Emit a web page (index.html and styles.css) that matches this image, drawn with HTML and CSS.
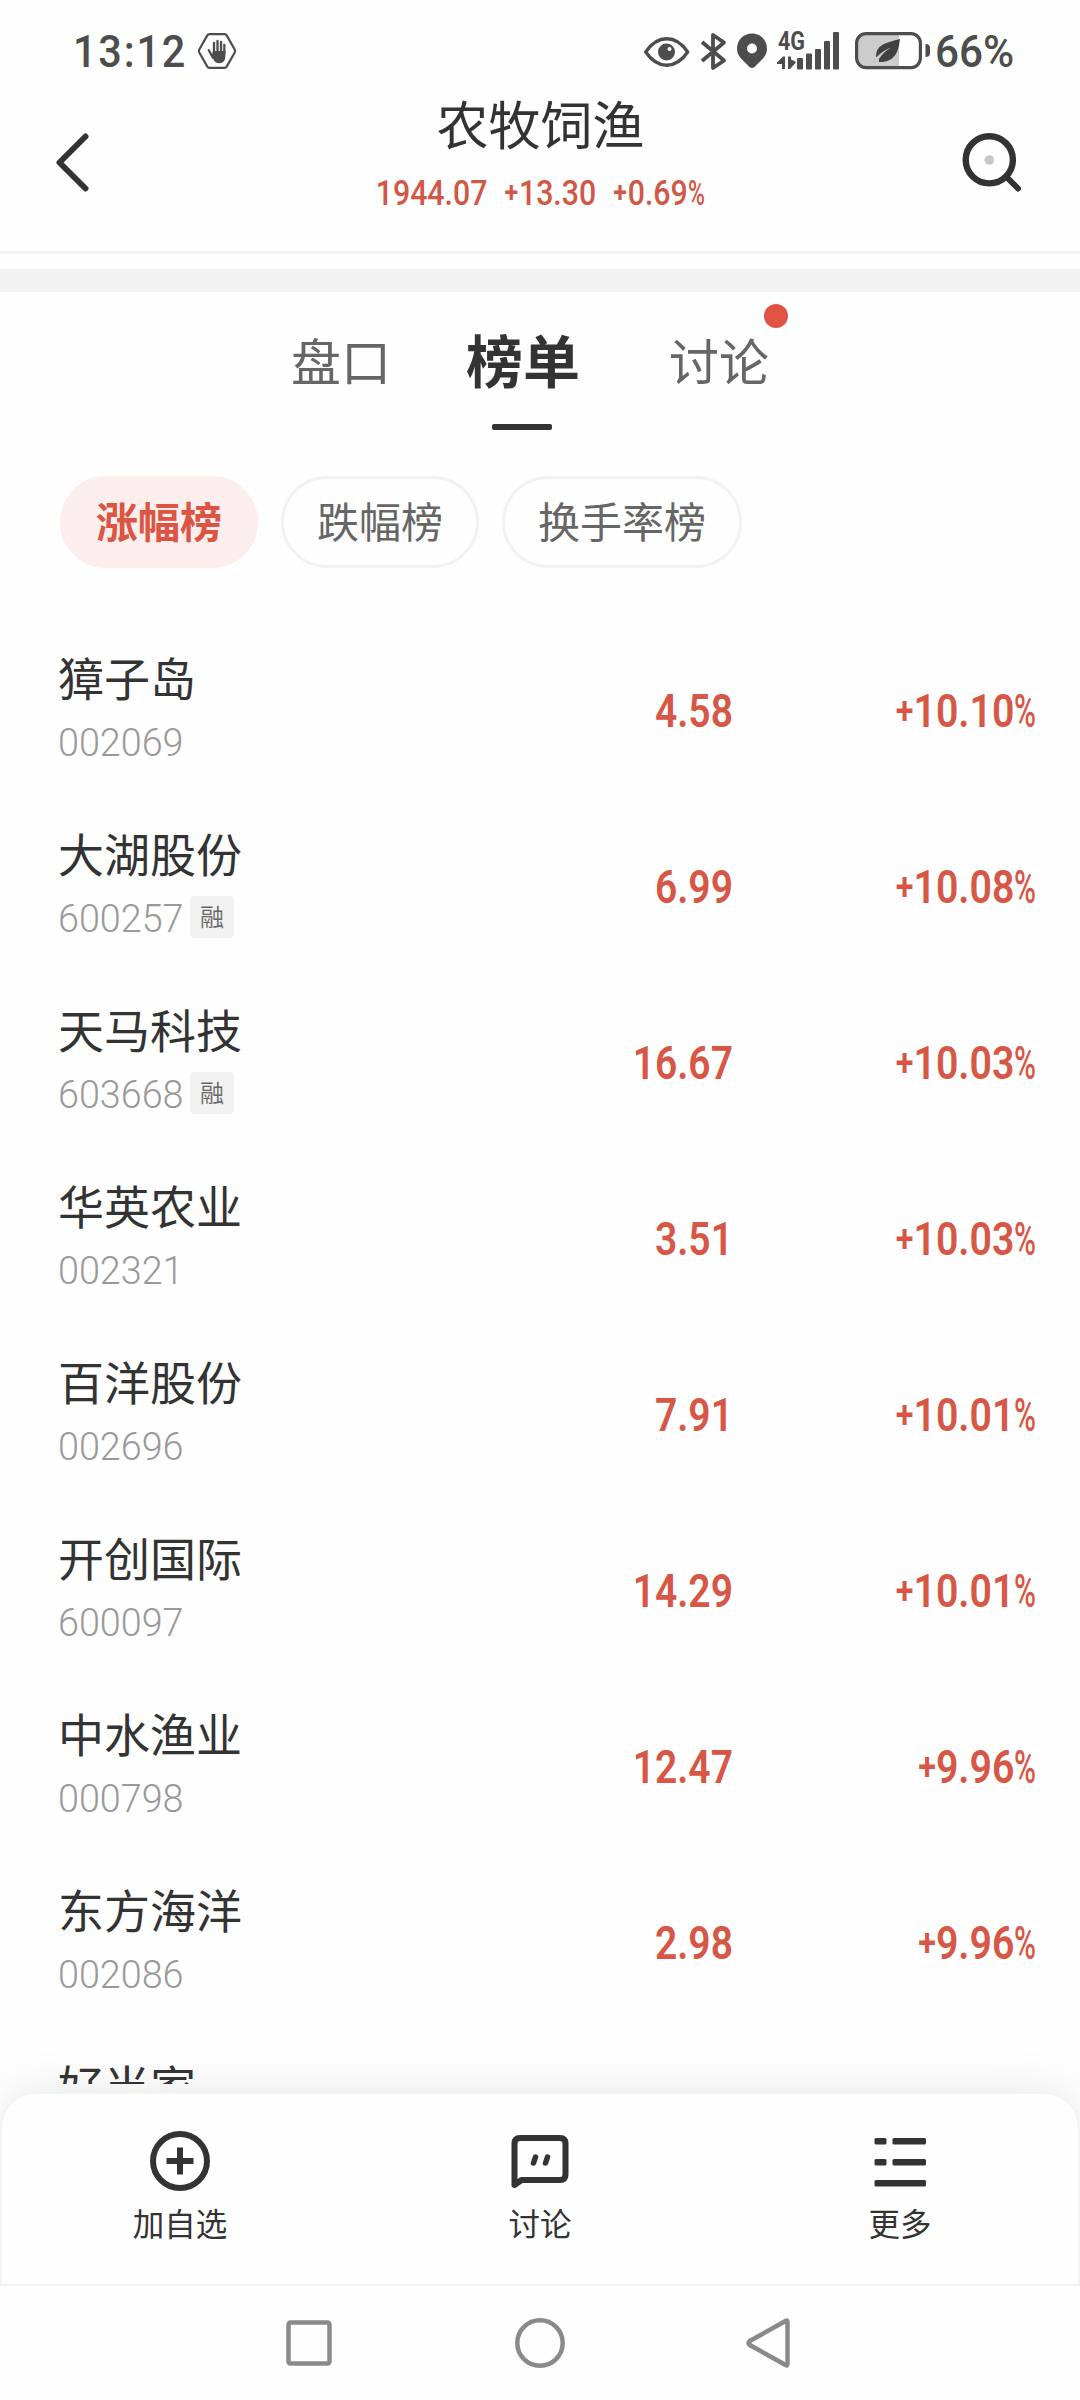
FILE: index.html
```html
<!DOCTYPE html>
<html lang="zh-CN">
<head>
<meta charset="utf-8">
<title>农牧饲渔</title>
<link rel="stylesheet" href="styles.css">
</head>
<body>
<div class="phone">
  <div class="status">
    <span class="clock">13:12</span>
    <svg class="hexagon" width="40" height="38" viewBox="0 0 40 38">
      <path d="M12.5 2.2h15q1.5 0 2.2 1.2l8 14q.8 1.6 0 3.2l-8 14q-.7 1.2-2.2 1.2h-15q-1.500 0-2.200-1.200l-8-14q-.8-1.600 0-3.200l8-14q.7-1.200 2.200-1.200z" fill="none" stroke="#4d4d4d" stroke-width="2.200"/>
      <path d="M11.800 18.300l4 7.200M17 11v11M20.500 9v12M24 10v12M27.300 13v9" fill="none" stroke="#4d4d4d" stroke-width="2.300" stroke-linecap="round"/>
      <path d="M15.900 19h12.500v5q0 7.200-6.200 7.200-3.600 0-5.500-3.200l-2-4z" fill="#4d4d4d"/>
    </svg>
    <div class="status-icons">
      <svg width="198" height="44" viewBox="642 29 198 44" fill="none" stroke="#4d4d4d">
        <path d="M645.700 52q9-13.200 21-13.200t21 13.200q-9 13.200-21 13.200t-21-13.200z" stroke-width="3.400" stroke-linejoin="round"/>
        <circle cx="666.500" cy="52" r="8.500" fill="#4d4d4d" stroke="none"/>
        <circle cx="669.500" cy="49" r="2" fill="#fff" stroke="none"/>
        <path d="M702 42l22 18.500-11 7.500v-33l11 7.500-22 18.500" stroke-width="3.800" stroke-linejoin="round"/>
        <path d="M752 33.500c8.500 0 15 6.500 15 15 0 5-2.500 8.500-5 11l-7.500 7.500q-2.500 2.200-5 0l-7.500-7.500c-2.500-2.500-5-6-5-11 0-8.500 6.500-15 15-15z" fill="#4d4d4d" stroke="none"/>
        <circle cx="752" cy="48.500" r="5" fill="#fff" stroke="none"/>
        <path d="M777 64v-1.500l6-6h2v12.500h-3v-5zM788 56.500h3v3l4.500 2v1.500l-5.500 6h-2z" fill="#4d4d4d" stroke="none"/>
        <g fill="#4d4d4d" stroke="none">
          <rect x="797" y="58" width="6" height="11.500" rx="1"/>
          <rect x="806" y="53.500" width="6" height="16" rx="1"/>
          <rect x="815" y="49" width="6" height="20.500" rx="1"/>
          <rect x="824" y="41" width="6" height="28.500" rx="1"/>
          <rect x="833" y="32" width="6" height="37.500" rx="1"/>
        </g>
      </svg>
      <span class="network">4G</span>
    </div>
    <svg class="battery" width="78" height="40" viewBox="854 31 78 40">
      <path d="M866 33.500h33v34.500h-33q-9.500 0-9.500-9.500v-15.500q0-9.500 9.500-9.500z" fill="#ccc"/>
      <rect x="856.600" y="33.600" width="63.800" height="34" rx="9.500" fill="none" stroke="#4d4d4d" stroke-width="3.200"/>
      <path d="M925.500 44q4.500 0 4.500 4v5q0 4-4.500 4z" fill="#4d4d4d"/>
      <path d="M900 39q-10.500 2.500-17 5.500-7.500 4-7 13 7.500-7.500 15.500-10-8 4-12.500 11.500l0 3q8 .6 13.500-4 6-4.500 7.500-19z" fill="#404040"/>
    </svg>
    <span class="charge">66%</span>
  </div>

  <header class="header">
    <svg class="back" width="34" height="60" viewBox="55 132 34 60"><path d="M85.500 136.500l-26 26 26 26" fill="none" stroke="#333" stroke-width="6" stroke-linecap="round" stroke-linejoin="round"/></svg>
    <div class="heading">
      <h1 class="title">农牧饲渔</h1>
      <div class="quote">
        <span>1944.07</span>
        <span><i class="plus">+</i>13.30</span>
        <span><i class="plus">+</i>0.69<i class="pct">%</i></span>
      </div>
    </div>
    <svg class="search" width="60" height="60" viewBox="962 132 60 60">
      <circle cx="989.300" cy="159.800" r="23.600" fill="none" stroke="#333" stroke-width="6.400"/>
      <circle cx="989.300" cy="160" r="4.800" fill="#c6c6c6"/>
      <path d="M1007 177.500l11 11" stroke="#333" stroke-width="6" stroke-linecap="round"/>
    </svg>
  </header>
  <div class="band"></div>

  <nav class="tabs">
    <span class="tab">盘口</span>
    <span class="tab active">榜单</span>
    <span class="tab notify">讨论</span>
  </nav>
  <div class="pills">
    <span class="pill selected">涨幅榜</span>
    <span class="pill">跌幅榜</span>
    <span class="pill">换手率榜</span>
  </div>

  <main class="list">
    <div class="row"><div class="stock"><div class="name">獐子岛</div><div class="meta"><span class="code">002069</span></div></div><div class="price">4.58</div><div class="rate"><i class="plus">+</i>10.10<i class="pct">%</i></div></div>
    <div class="row"><div class="stock"><div class="name">大湖股份</div><div class="meta"><span class="code">600257</span><span class="tag">融</span></div></div><div class="price">6.99</div><div class="rate"><i class="plus">+</i>10.08<i class="pct">%</i></div></div>
    <div class="row"><div class="stock"><div class="name">天马科技</div><div class="meta"><span class="code">603668</span><span class="tag">融</span></div></div><div class="price">16.67</div><div class="rate"><i class="plus">+</i>10.03<i class="pct">%</i></div></div>
    <div class="row"><div class="stock"><div class="name">华英农业</div><div class="meta"><span class="code">002321</span></div></div><div class="price">3.51</div><div class="rate"><i class="plus">+</i>10.03<i class="pct">%</i></div></div>
    <div class="row"><div class="stock"><div class="name">百洋股份</div><div class="meta"><span class="code">002696</span></div></div><div class="price">7.91</div><div class="rate"><i class="plus">+</i>10.01<i class="pct">%</i></div></div>
    <div class="row"><div class="stock"><div class="name">开创国际</div><div class="meta"><span class="code">600097</span></div></div><div class="price">14.29</div><div class="rate"><i class="plus">+</i>10.01<i class="pct">%</i></div></div>
    <div class="row"><div class="stock"><div class="name">中水渔业</div><div class="meta"><span class="code">000798</span></div></div><div class="price">12.47</div><div class="rate"><i class="plus">+</i>9.96<i class="pct">%</i></div></div>
    <div class="row"><div class="stock"><div class="name">东方海洋</div><div class="meta"><span class="code">002086</span></div></div><div class="price">2.98</div><div class="rate"><i class="plus">+</i>9.96<i class="pct">%</i></div></div>
    <div class="row"><div class="stock"><div class="name">好当家</div></div></div>
  </main>

  <footer class="actions">
    <div class="action">
      <svg width="64" height="64" viewBox="0 0 64 64" fill="none" stroke="#333" stroke-width="6"><circle cx="32" cy="32" r="27"/><path d="M18.500 32h27M32 18.500v27"/></svg>
      <span>加自选</span>
    </div>
    <div class="action">
      <svg width="64" height="64" viewBox="0 0 64 64" fill="none" stroke="#333" stroke-width="6" stroke-linejoin="round"><path d="M6.500 56v-41.500q0-5.500 5.500-5.500h40q5.500 0 5.500 5.500v31q0 5.500-5.500 5.500h-38.500z"/><path d="M27.500 28l-2 6M39.500 28l-2 6" stroke-width="5.500" stroke-linecap="round"/></svg>
      <span>讨论</span>
    </div>
    <div class="action">
      <svg width="64" height="64" viewBox="0 0 64 64" fill="#333"><rect x="6.500" y="9" width="12" height="6.500" rx="1.500"/><rect x="24.500" y="9" width="33.500" height="6.500" rx="1.500"/><rect x="6.500" y="30" width="12" height="6.500" rx="1.500"/><rect x="24.500" y="30" width="33.500" height="6.500" rx="1.500"/><rect x="6.500" y="51" width="51.500" height="6.500" rx="1.500"/></svg>
      <span>更多</span>
    </div>
  </footer>

  <div class="system-nav">
    <svg width="54" height="54" viewBox="0 0 54 54"><rect x="6.500" y="6.500" width="41" height="41" rx="2" /></svg>
    <svg width="54" height="54" viewBox="0 0 54 54"><circle cx="27" cy="27" r="22.700"/></svg>
    <svg width="54" height="54" viewBox="0 0 54 54"><path d="M41.500 5q2-1.500 2 1v42q0 2.500-2 1l-36-20.200q-2-1.800 0-3.600z"/></svg>
  </div>
</div>
</body>
</html>
```
FILE: styles.css
```css
* {
  box-sizing: border-box;
}

body {
  margin: 0;
  background: #fefefe;
  color: #333;
  font-family: "Noto Sans CJK SC", sans-serif;
}

i {
  font-style: normal;
}

.phone {
  display: flex;
  flex-direction: column;
  width: 1080px;
  height: 2400px;
  overflow: hidden;
}

/* System status bar */
.status {
  display: flex;
  height: 80px;
  padding: 0 0 0 75px;
  color: #4d4d4d;
  font-family: Roboto, sans-serif;
  font-weight: 500;
  font-size: 45px;
  line-height: 80px;
}

.clock {
  width: 122px;
  padding-top: 12px;
  letter-spacing: 2px;
  transform: translateX(-2px) scaleX(0.92);
  transform-origin: left;
}

.hexagon {
  margin-top: 32px;
}

.status-icons {
  position: relative;
  width: 198px;
  margin: 29px 0 0 405px;
}

.status-icons svg {
  display: block;
}

.network {
  position: absolute;
  left: 136px;
  top: 2px;
  font-size: 25px;
  font-weight: 700;
  line-height: 22px;
  transform: scaleX(0.86);
  transform-origin: left;
}

.battery {
  margin: 31px 0 0 14px;
}

.charge {
  width: 90px;
  margin-left: 3px;
  padding-top: 12px;
  transform: scaleX(0.94);
  transform-origin: left;
}

/* Page header */
.header {
  display: flex;
  justify-content: space-between;
  height: 174px;
  padding: 0 58px 0 55px;
  border-bottom: 3px solid #f2f2f2;
}

.back,
.search {
  margin-top: 52px;
}

.heading {
  display: flex;
  flex-direction: column;
  align-items: center;
  margin-left: 30px;
}

.title {
  margin: 5px 0 0;
  font-size: 52px;
  font-weight: 400;
  line-height: 76px;
}

.quote {
  display: flex;
  gap: 20px;
  height: 50px;
  margin-top: 7px;
  color: #d15746;
  font: 500 35.200px/50px Roboto, sans-serif;
  transform: scaleX(0.86);
}

.plus {
  display: inline-block;
  width: 0.580em;
  font-size: 0.820em;
  font-weight: 600;
  line-height: 1;
  transform: translateY(-3px);
}

.pct {
  display: inline-block;
  width: 0.550em;
  font-weight: 500;
  line-height: 1;
  transform: scaleX(0.76);
  transform-origin: left;
}

.band {
  height: 23px;
  margin-top: 15px;
  background: #f2f2f2;
}

/* Section tabs */
.tabs {
  display: flex;
  gap: 75px;
  height: 138px;
  padding-left: 291px;
}

.tab {
  position: relative;
  padding-top: 29px;
  color: #666;
  font-size: 50px;
  line-height: 76px;
}

.active {
  padding-top: 28px;
  color: #333;
  font-size: 57px;
  font-weight: 700;
}

.active::after {
  content: "";
  position: absolute;
  left: 50%;
  top: 132px;
  width: 60px;
  height: 6px;
  margin-left: -31px;
  border-radius: 2px;
  background: #333;
}

.notify {
  margin-left: 14px;
}

.notify::after {
  content: "";
  position: absolute;
  right: -19px;
  top: 12px;
  width: 24px;
  height: 24px;
  border-radius: 50%;
  background: #e05241;
}

/* Ranking filters */
.pills {
  display: flex;
  gap: 23px;
  margin-top: 46px;
  padding-left: 60px;
}

.pill {
  height: 92px;
  padding: 0 33px;
  border: 3px solid #f2f2f2;
  border-radius: 46px;
  color: #666;
  font-size: 42px;
  line-height: 82px;
}

.selected {
  border-color: #fbeeed;
  background: #fbeeed;
  color: #dc5443;
  font-weight: 700;
}

/* Stock list */
.list {
  flex: none;
  height: 1516px;
  padding-top: 55px;
  overflow: hidden;
}

.row {
  display: grid;
  grid-template-columns: 480px 195px 302px;
  height: 176px;
  padding-left: 58px;
}

.name {
  height: 60px;
  margin-top: 23px;
  font-size: 46px;
  line-height: 60px;
}

.meta {
  display: flex;
  height: 42px;
  margin-top: 14px;
}

.code {
  width: 132px;
  color: #999;
  font: 350 39.500px/46px Roboto, sans-serif;
  transform: scaleX(0.955);
  transform-origin: left;
}

.tag {
  width: 44px;
  border-radius: 4px;
  background: #f2f2f2;
  color: #666;
  font-size: 24px;
  font-weight: 350;
  line-height: 40px;
  text-align: center;
}

.price,
.rate {
  color: #d75746;
  font: 600 46.500px/176px Roboto, sans-serif;
  text-align: right;
  white-space: nowrap;
  transform: scaleX(0.84);
  transform-origin: right;
}

.rate {
  transform: translateX(1px) scaleX(0.845);
}

/* Bottom action sheet */
.actions {
  position: relative;
  display: flex;
  flex: none;
  height: 194px;
  margin-top: 8px;
  padding: 35px 0 0;
  border: 2px solid #f3f3f3;
  border-radius: 36px 36px 0 0;
  background: #fefefe;
}

.actions::before {
  content: "";
  position: absolute;
  inset: -2px;
  z-index: -1;
  border-radius: 36px 36px 0 0;
  box-shadow: 0 0 50px rgba(0, 0, 0, 0.090);
}

.action {
  display: flex;
  flex: 1;
  flex-direction: column;
  align-items: center;
  font-size: 31.500px;
  line-height: 48px;
}

.action:first-child {
  margin-left: -2px;
}

.action:last-child {
  margin-right: -2px;
}

.action svg {
  margin-bottom: 5px;
}

/* System navigation */
.system-nav {
  z-index: 1;
  display: flex;
  flex: none;
  justify-content: center;
  gap: 177px;
  height: 114px;
  padding-top: 30px;
  background: #fefefe;
}

.system-nav svg {
  fill: none;
  stroke: #8a8a8a;
  stroke-width: 4.500;
}
```
